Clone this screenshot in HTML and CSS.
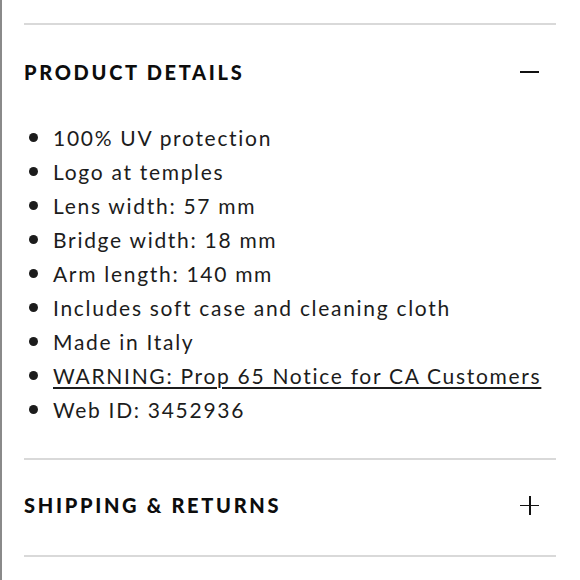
FILE: index.html
```html
<!DOCTYPE html>
<html>
<head>
<meta charset="utf-8">
<link rel="stylesheet" href="styles.css">
</head>
<body>
<div class="page">
  <section class="acc acc-open">
    <div class="acc-head">
      <h2 class="acc-title">PRODUCT DETAILS</h2>
      <span class="icon-minus"></span>
    </div>
    <ul class="details">
      <li>100% UV protection</li>
      <li>Logo at temples</li>
      <li>Lens width: 57 mm</li>
      <li>Bridge width: 18 mm</li>
      <li>Arm length: 140 mm</li>
      <li>Includes soft case and cleaning cloth</li>
      <li>Made in Italy</li>
      <li><a href="#" class="warn">WARNING: Prop 65 Notice for CA Customers</a></li>
      <li>Web ID: 3452936</li>
    </ul>
  </section>
  <section class="acc acc-closed">
    <div class="acc-head">
      <h2 class="acc-title">SHIPPING &amp; RETURNS</h2>
      <span class="icon-plus"></span>
    </div>
  </section>
</div>
</body>
</html>
```
FILE: styles.css
```css
html, body {
  margin: 0;
  padding: 0;
  background: #fff;
}
body {
  font-family: Lato, "Liberation Sans", sans-serif;
  color: #1c1c1c;
}
.page {
  border-left: 2px solid #8a8a8a;
  min-height: 580px;
  box-sizing: border-box;
  padding: 23px 24px 0 22px;
}
.acc {
  border-top: 2px solid #d9d9d9;
}
.acc-closed {
  border-bottom: 2px solid #d9d9d9;
}
.acc-head {
  display: flex;
  align-items: center;
  justify-content: space-between;
  height: 94px;
}
.acc-closed .acc-head {
  height: 90px;
  padding-bottom: 5px;
}
.acc-title {
  margin: 0;
  font-size: 20px;
  font-weight: 900;
  letter-spacing: 2.7px;
  color: #0d0d0d;
}
.icon-minus {
  width: 19px;
  height: 2px;
  background: #111;
  margin-right: 17px;
}
.icon-plus {
  position: relative;
  width: 19px;
  height: 19px;
  margin-right: 17px;
}
.icon-plus::before,
.icon-plus::after {
  content: "";
  position: absolute;
  background: #111;
}
.icon-plus::before {
  left: 0;
  right: 0;
  top: 9px;
  height: 1.5px;
}
.icon-plus::after {
  top: 0;
  bottom: 0;
  left: 9px;
  width: 1.5px;
}
.details {
  list-style: none;
  margin: 1px 0 0;
  padding: 0 0 32px;
}
.details li {
  display: flex;
  align-items: center;
  height: 34px;
  font-size: 21px;
  letter-spacing: 1.7px;
}
.details li::before {
  content: "";
  width: 9px;
  height: 9px;
  border-radius: 50%;
  background: #1c1c1c;
  margin-left: 5px;
  margin-right: 15px;
  flex: none;
}
.warn {
  color: #1c1c1c;
  text-decoration: underline;
  text-underline-offset: 3px;
  text-decoration-thickness: 1.5px;
}
```
